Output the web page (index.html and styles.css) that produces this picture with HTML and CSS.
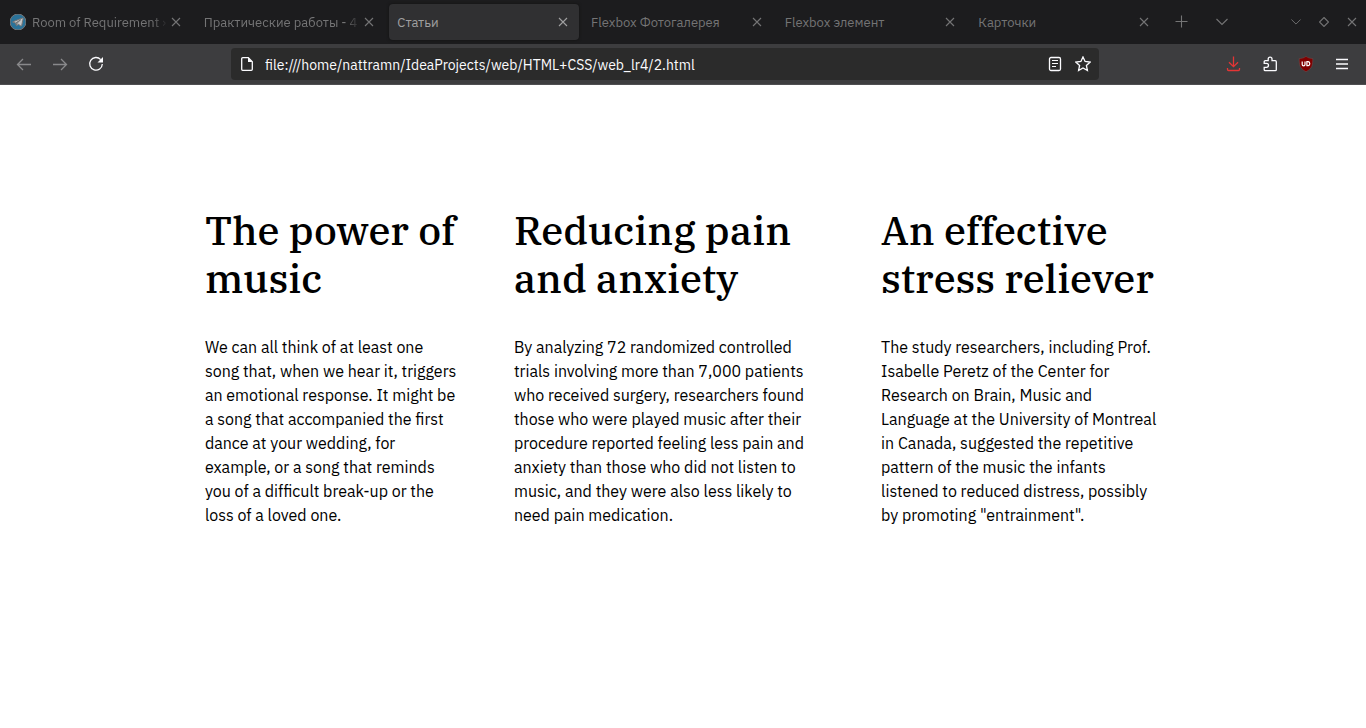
FILE: index.html
```html
<!DOCTYPE html>
<html lang="ru">
<head>
<meta charset="utf-8">
<title>Статьи</title>
<meta name="viewport" content="width=device-width, initial-scale=1">
<link rel="stylesheet" href="styles.css">
</head>
<body>
<svg class="sprite" aria-hidden="true">
  <symbol id="close" viewBox="0 0 10 10"><path d="M1 1l8 8M9 1l-8 8"/></symbol>
  <symbol id="chevron" viewBox="0 0 12 8"><path d="M.5 1L6 6.500L11.500 1"/></symbol>
</svg>
<header class="browser">
  <div class="tabstrip">
    <nav class="tabs" aria-label="Вкладки">
      <div class="tab">
        <svg class="favicon" viewBox="0 0 16 16" aria-hidden="true"><circle cx="8" cy="8" r="8" fill="#2a7299"/><path d="M2.800 7.800L12.500 4c.5-.2.8.1.7.6l-1.500 7c-.1.5-.5.6-.9.4L8.300 10.200 7 11.500c-.3.3-.6.2-.7-.2L5.600 9l-2.700-.8c-.3-.1-.3-.3-.1-.4z" fill="#c3c5c6"/><path d="M5.700 9L10.600 5.800 7 9.300l-.4 2z" fill="#7ba0b3"/></svg>
        <button class="tab-title faded" type="button">Room of Requirement ›</button>
        <button class="tab-close" type="button" aria-label="Закрыть"><svg class="icon"><use href="#close"/></svg></button>
      </div>
      <div class="tab">
        <button class="tab-title faded" type="button">Практические работы - 4</button>
        <button class="tab-close" type="button" aria-label="Закрыть"><svg class="icon"><use href="#close"/></svg></button>
      </div>
      <div class="tab tab-active">
        <button class="tab-title" type="button">Статьи</button>
        <button class="tab-close" type="button" aria-label="Закрыть"><svg class="icon"><use href="#close"/></svg></button>
      </div>
      <div class="tab">
        <button class="tab-title" type="button">Flexbox Фотогалерея</button>
        <button class="tab-close" type="button" aria-label="Закрыть"><svg class="icon"><use href="#close"/></svg></button>
      </div>
      <div class="tab">
        <button class="tab-title" type="button">Flexbox элемент</button>
        <button class="tab-close" type="button" aria-label="Закрыть"><svg class="icon"><use href="#close"/></svg></button>
      </div>
      <div class="tab">
        <button class="tab-title" type="button">Карточки</button>
        <button class="tab-close" type="button" aria-label="Закрыть"><svg class="icon"><use href="#close"/></svg></button>
      </div>
    </nav>
    <div class="tab-actions">
      <button class="strip-button" type="button" aria-label="Новая вкладка"><svg class="icon icon-plus" viewBox="0 0 14 14"><path d="M6.500 .5v12M.5 6.500h12"/></svg></button>
      <button class="strip-button" type="button" aria-label="Список вкладок"><svg class="icon icon-chevron"><use href="#chevron"/></svg></button>
    </div>
    <div class="window-controls">
      <button class="window-button" type="button" aria-label="Свернуть"><svg class="icon icon-minimize"><use href="#chevron"/></svg></button>
      <button class="window-button" type="button" aria-label="Развернуть"><svg class="icon" viewBox="0 0 10 10"><path d="M5 .5L9.500 5 5 9.500.5 5z"/></svg></button>
      <button class="window-button" type="button" aria-label="Закрыть окно"><svg class="icon"><use href="#close"/></svg></button>
    </div>
  </div>
  <div class="toolbar">
    <div class="nav-buttons">
      <button class="tool muted" type="button" aria-label="Назад"><svg viewBox="0 0 16 16"><path class="bold" d="M15 8.500H1.800M7 3L1.500 8.500 7 14"/></svg></button>
      <button class="tool muted" type="button" aria-label="Вперёд"><svg viewBox="0 0 16 16"><path class="bold" d="M1 8.500h13.200M9 3L14.500 8.500 9 14"/></svg></button>
      <button class="tool" type="button" aria-label="Обновить"><svg viewBox="0 0 16 16"><path class="bold" d="M12.700 3.600A6.300 6.300 0 1 0 14.300 8"/><path class="solid" d="M15 1v5.500H9.500z"/></svg></button>
    </div>
    <form class="urlbar">
      <svg class="page-icon" viewBox="0 0 16 16" aria-hidden="true"><path class="bold" d="M3.700 1.700h5.600l4 4v7.600a1 1 0 0 1-1 1H3.700a1 1 0 0 1-1-1V2.700a1 1 0 0 1 1-1z"/><path class="solid" d="M9 1.500v4.600h4.500z"/></svg>
      <input class="url" type="text" aria-label="Адрес" value="file:///home/nattramn/IdeaProjects/web/HTML+CSS/web_lr4/2.html">
      <button class="url-action" type="button" aria-label="Режим чтения"><svg viewBox="0 0 16 16"><rect class="bold" x="2.500" y="1.500" width="11" height="13" rx="1.500"/><path d="M5 4.500h6M5 7.500h6M5 10.500h4"/></svg></button>
      <button class="url-action" type="button" aria-label="Добавить в закладки"><svg viewBox="0 0 16 16"><path class="bold" d="M8 .9l2.100 4.600 5.100.6-3.800 3.400 1 5L8 12l-4.400 2.500 1-5L.8 6.100l5.100-.6z"/></svg></button>
    </form>
    <div class="extensions">
      <button class="tool download" type="button" aria-label="Загрузки"><svg viewBox="0 0 16 16"><path class="bold" d="M7.500 .5v10M3 6.200L7.500 10.700l4.500-4.500M1.500 12v1.500a1 1 0 0 0 1 1h10a1 1 0 0 0 1-1V12"/></svg></button>
      <button class="tool" type="button" aria-label="Расширения"><svg viewBox="0 0 16 16"><path class="bold" d="M2.200 7.300V5.700a1 1 0 0 1 1-1h3V3a1.900 1.900 0 0 1 3.800 0v1.700h3.300a1 1 0 0 1 1 1v8a1 1 0 0 1-1 1H3.200a1 1 0 0 1-1-1v-2.400h2.300a2 2 0 0 0 0-4z"/></svg></button>
      <button class="tool" type="button" aria-label="uBlock"><svg viewBox="0 0 16 16"><path d="M8 .3C6 2 3.500 2.500 1.200 2.500c0 7 .5 9.700 6.800 13.300 6.300-3.600 6.800-6.300 6.800-13.300C12.500 2.500 10 2 8 .3z" fill="#800000" stroke="#6b5555" stroke-width=".5"/><path d="M4.200 5.500v3a1.300 1.300 0 0 0 2.800 0v-3M8.900 5.700v3.900h1.300a2 2 0 0 0 0-3.900z" stroke="#fff" stroke-width="1.200"/></svg></button>
      <button class="tool" type="button" aria-label="Меню"><svg viewBox="0 0 16 16"><path class="bold" d="M2 3.500h12M2 8h12M2 12.500h12"/></svg></button>
    </div>
  </div>
</header>
<main class="articles" lang="en">
  <article class="article">
    <h1 class="heading">The power of music</h1>
    <p class="text">We can all think of at least one song that, when we hear it, triggers an emotional response. It might be a song that accompanied the first dance at your wedding, for example, or a song that reminds you of a difficult break-up or the loss of a loved one.</p>
  </article>
  <article class="article">
    <h1 class="heading">Reducing pain and anxiety</h1>
    <p class="text">By analyzing 72 randomized controlled trials involving more than 7,000 patients who received surgery, researchers found those who were played music after their procedure reported feeling less pain and anxiety than those who did not listen to music, and they were also less likely to need pain medication.</p>
  </article>
  <article class="article">
    <h1 class="heading">An effective stress reliever</h1>
    <p class="text">The study researchers, including Prof. Isabelle Peretz of the Center for Research on Brain, Music and Language at the University of Montreal in Canada, suggested the repetitive pattern of the music the infants listened to reduced distress, possibly by promoting "entrainment".</p>
  </article>
</main>
</body>
</html>
```
FILE: styles.css
```css
* { box-sizing: border-box; }
body { margin: 0; background: #fff; color: #000; font-family: "IBM Plex Sans", Roboto, sans-serif; }
button, input { margin: 0; padding: 0; border: 0; background: none; color: inherit; font: inherit; }
svg { display: block; fill: none; stroke: currentColor; }
.sprite { display: none; }
.solid { fill: currentColor; stroke: none; }
.bold { stroke-width: 1.3; }

.tabstrip { display: flex; height: 44px; background: #1c1c1e; color: #747475; font-size: 13px; }
.tabs { display: flex; flex: 1; min-width: 0; }
.tab { display: flex; flex: 1; align-items: center; min-width: 0; margin: 4px 2px; padding: 0 8px; border-radius: 4px; }
.tab-active { background: #303032; color: #a0a0a1; box-shadow: 0 0 3px #111; }
.favicon { flex: none; width: 16px; height: 16px; margin-right: 6px; }
.tab-title { flex: 1; min-width: 0; overflow: hidden; padding-top: 2px; line-height: 20px; text-align: left; white-space: nowrap; }
.faded { -webkit-mask-image: linear-gradient(to left, transparent, #000 16px); mask-image: linear-gradient(to left, transparent, #000 16px); }
.tab-close { display: grid; flex: none; place-items: center; width: 16px; height: 20px; }
.icon { width: 10px; height: 10px; stroke-width: 1.1; }
.icon-plus { width: 14px; height: 14px; }
.icon-chevron { width: 12px; height: 8px; }
.icon-minimize { width: 10px; height: 8px; }
.tab-actions { display: flex; }
.strip-button { display: grid; place-items: center; width: 40px; }
.window-controls { display: flex; margin-left: 40px; }
.window-button { display: grid; place-items: center; width: 28px; }

.toolbar { display: flex; align-items: center; height: 41px; padding: 0 6px; border-bottom: 1px solid #4f4f51; background: #3d3d3f; color: #fbfbfe; }
.nav-buttons { display: flex; flex: none; width: 225px; }
.tool { display: grid; place-items: center; width: 36px; height: 32px; }
.tool svg, .url-action svg, .page-icon { width: 16px; height: 16px; }
.muted { color: #89898b; }
.download { color: #e53535; }
.urlbar { display: flex; flex: 1; align-items: center; height: 32px; padding: 0 2px 0 8px; border-radius: 4px; background: #2b2b2b; }
.page-icon { flex: none; }
.url { flex: 1; min-width: 0; height: 32px; margin-left: 10px; padding-top: 2px; outline: 0; font-size: 14px; }
.url-action { display: grid; place-items: center; width: 28px; height: 28px; }
.extensions { display: flex; flex: none; margin-left: 117px; }

.articles { display: grid; grid-template-columns: 253fr 311fr 280fr; gap: 56px; padding: 121px 15% 40px; }
.heading { margin: 0 0 33px; font-family: "IBM Plex Serif", "DejaVu Serif Condensed", serif; font-size: 40px; font-weight: 500; line-height: 48px; }
.text { margin: 0; font-size: 16px; line-height: 24px; }
```
